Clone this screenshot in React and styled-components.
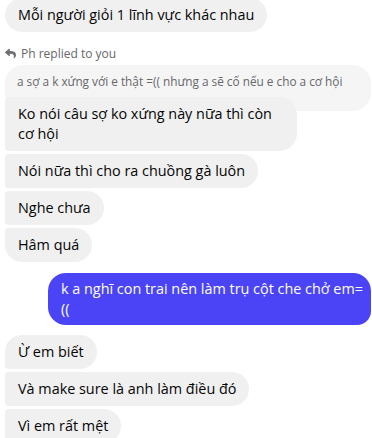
import React from "react";
import styled, { createGlobalStyle } from "styled-components";
import { FaReply } from "react-icons/fa";

const GlobalStyle = createGlobalStyle`
    body {
        margin: 0;
        background: #ffffff;
        font-family: "Open Sans", "Noto Sans", sans-serif;
        overflow: hidden;
    }
`;

const Chat = styled.div`
    display: flex;
    flex-direction: column;
    padding: 0 1px 0 5px;
    margin-top: -2px;
    width: 372px;
    box-sizing: border-box;
`;

const Group = styled.div`
    display: flex;
    flex-direction: column;
    align-items: ${(p) => (p.$mine ? "flex-end" : "flex-start")};
    gap: 3px;
    margin-bottom: ${(p) => p.$space || 0}px;
`;

const Bubble = styled.div`
    position: relative;
    max-width: 266px;
    padding: 7px 13px;
    font-size: 14.4px;
    line-height: 20px;
    color: #050505;
    background: #f0f0f0;
    border-radius: ${(p) => p.$radius || "18px"};
`;

const MineBubble = styled(Bubble)`
    max-width: none;
    width: 298px;
    padding: 6px 12px 6px 13px;
    line-height: 20px;
    white-space: nowrap;
    color: #ffffff;
    background: #4a44f6;
    border-radius: 18px 18px 14px 18px;
`;

const ReplyLabel = styled.div`
    display: flex;
    align-items: center;
    gap: 5px;
    height: 16px;
    margin: 13px 0 4px;
    font-size: 12px;
    color: #65676b;

    svg {
        width: 11px;
        height: 11px;
        color: #6e7074;
    }
`;

const Quote = styled.div`
    align-self: stretch;
    padding: 8px 8px 22px 12px;
    margin-bottom: -14px;
    font-size: 11.8px;
    line-height: 16px;
    white-space: nowrap;
    color: #65676b;
    background: #f5f5f5;
    border-radius: 18px;
`;

const first = "18px 18px 18px 4px";
const middle = "4px 18px 18px 4px";
const last = "4px 18px 18px 18px";

const App = () => {
    return (
        <>
            <GlobalStyle />
            <Chat>
                <Group>
                    <Bubble>Mỗi người giỏi 1 lĩnh vực khác nhau</Bubble>
                </Group>
                <ReplyLabel>
                    <FaReply />
                    <span>Ph replied to you</span>
                </ReplyLabel>
                <Quote>a sợ a k xứng với e thật =(( nhưng a sẽ cố nếu e cho a cơ hội</Quote>
                <Group $space={11}>
                    <Bubble $radius={"4px 18px 18px 4px"}>Ko nói câu sợ ko xứng này nữa thì còn cơ hội</Bubble>
                    <Bubble $radius={middle}>Nói nữa thì cho ra chuồng gà luôn</Bubble>
                    <Bubble $radius={middle}>Nghe chưa</Bubble>
                    <Bubble $radius={last}>Hâm quá</Bubble>
                </Group>
                <Group $mine $space={10}>
                    <MineBubble>
                        k a nghĩ con trai nên làm trụ cột che chở em=
                        <br />
                        ((
                    </MineBubble>
                </Group>
                <Group>
                    <Bubble $radius={first}>Ừ em biết</Bubble>
                    <Bubble $radius={middle}>Và make sure là anh làm điều đó</Bubble>
                    <Bubble $radius={middle}>Vì em rất mệt</Bubble>
                </Group>
            </Chat>
        </>
    );
};

export default App;
